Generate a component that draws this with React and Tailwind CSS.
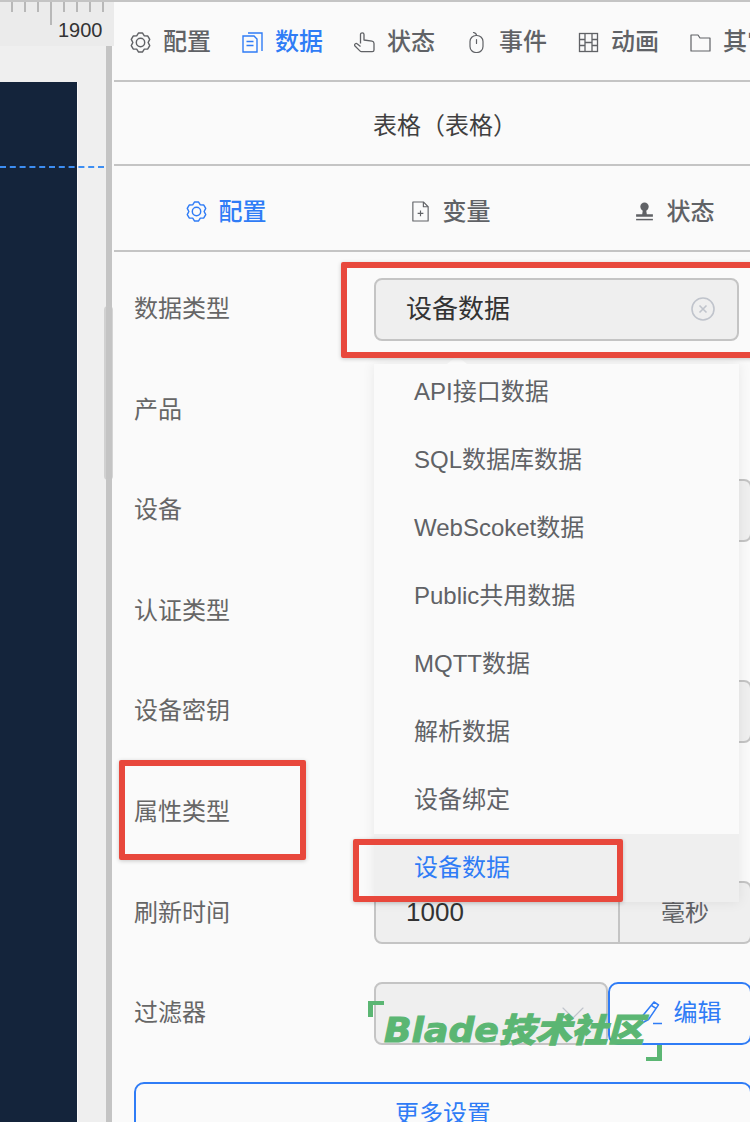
import { ChevronDown } from "lucide-react";

const Gear = ({ className }) => (
  <svg viewBox="1 1 22 22" className={className} fill="none" stroke="currentColor" strokeWidth="1.5" strokeLinejoin="round">
    <path d="M10 2h4l2 3.07 3.66.2 2 3.46L20 12l1.66 3.27-2 3.46-3.66.2-2 3.07h-4l-2-3.07-3.66-.2-2-3.46L4 12 2.34 8.73l2-3.46L8 5.07z" />
    <circle cx="12" cy="12" r="4.4" />
  </svg>
);

const DocCopy = ({ className }) => (
  <svg viewBox="0 0 21 21" className={className} fill="none" stroke="currentColor" strokeWidth="1.4">
    <path d="M6 1h14v18" />
    <path d="M1 4h11l3 3v13H1z" />
    <path d="M4.5 9.5h7M4.5 13.5h7" />
  </svg>
);

const Hand = ({ className }) => (
  <svg viewBox="0 0 21 21" className={className} fill="none" stroke="currentColor" strokeWidth="1.3" strokeLinejoin="round">
    <path d="M6.5 11.5V2.4c0-2 3.5-2 3.5 0V8l8 1.2c1.4.2 2 1.1 2 2.3v6.5c0 1-.7 1.7-1.7 1.7H7.5c-.7 0-1.2-.3-1.6-.8L1 14c-1.2-1.6.9-3.4 2.4-2l3.1 2.6" />
  </svg>
);

const Mouse = ({ className }) => (
  <svg viewBox="0 0 21 21" className={className} fill="none" stroke="currentColor" strokeWidth="1.2" strokeLinecap="round">
    <rect x="4" y="3.5" width="13" height="17" rx="6" />
    <path d="M10.5 7.5v4M10.5 3.5c0-1.5-1-2.5-3-3" />
  </svg>
);

const Film = ({ className }) => (
  <svg viewBox="0 0 21 21" className={className} fill="none" stroke="currentColor" strokeWidth="1.3">
    <rect x="1.5" y="1.5" width="18" height="18" />
    <path d="M7 1.5v18M14 1.5v18M1.5 7.5h5.5M1.5 13.5h5.5M14 7.5h5.5M14 13.5h5.5M7 10.5h7" />
  </svg>
);

const Folder = ({ className }) => (
  <svg viewBox="0 0 21 21" className={className} fill="none" stroke="currentColor" strokeWidth="1.2" strokeLinejoin="round">
    <path d="M1 3h7l2 3h10v13H1z" />
  </svg>
);

const DocAdd = ({ className }) => (
  <svg viewBox="1 0 18 22" className={className} fill="none" stroke="currentColor" strokeWidth="1.2" strokeLinejoin="round">
    <path d="M2 1h11l5 5v15H2z" />
    <path d="M13 1v5h5M7 13h6M10 10v6" />
  </svg>
);

const Stamp = ({ className }) => (
  <svg viewBox="0 0 20 20" className={className} fill="currentColor">
    <circle cx="10" cy="5.5" r="4" />
    <path d="M8.5 8h3l.7 4.5H18V15H2v-2.5h5.8z" />
    <rect x="2" y="17" width="16" height="1.4" />
  </svg>
);

const Pencil = ({ className }) => (
  <svg viewBox="0 0 24 24" className={className} fill="none" stroke="currentColor" strokeWidth="1.5" strokeLinejoin="round">
    <path d="M15 1l4.5 2.8L9.5 18.5 3 22l.5-7z" />
    <path d="M12.5 4.5l4.5 2.8M14 22.5h9" />
  </svg>
);

const topTabs = [
  { label: "配置", Icon: Gear },
  { label: "数据", Icon: DocCopy, active: true },
  { label: "状态", Icon: Hand },
  { label: "事件", Icon: Mouse },
  { label: "动画", Icon: Film },
  { label: "其它", Icon: Folder },
];

const subTabs = [
  { label: "配置", Icon: Gear, active: true },
  { label: "变量", Icon: DocAdd },
  { label: "状态", Icon: Stamp },
];

const menuItems = ["API接口数据", "SQL数据库数据", "WebScoket数据", "Public共用数据", "MQTT数据", "解析数据", "设备绑定", "设备数据"];

const Ruler = () => (
  <div className="relative h-[44px] w-[114px] bg-[#ebebeb]">
    <div className="flex h-[10px] gap-[11px] pl-[11px]">
      {[0, 1, 2, 3, 4, 5, 6, 7].map((i) => (
        <span key={i} className={`w-[2px] bg-[#b8b8b8] ${i === 3 ? "h-[23px]" : "h-[10px]"}`} />
      ))}
    </div>
    <span className="absolute left-[58px] top-[16px] text-[20px] leading-[24px] text-[#333]">1900</span>
  </div>
);

const Row = ({ label, children }) => (
  <div className="flex h-[63px] items-center">
    <span className="w-[240px] shrink-0 text-[24px] text-[#666]">{label}</span>
    {children}
  </div>
);

const Box = ({ className = "", children }) => (
  <div className={`flex h-full items-center border-2 border-[#c4c4c4] bg-[#efefef] ${className}`}>{children}</div>
);

const App = () => {
  return (
    <div className="relative flex h-[1122px] w-[750px] overflow-hidden border-t-2 border-[#c4c4c4] bg-[#fafafa] font-['Liberation_Sans','Noto_Sans_CJK_SC',sans-serif]">
      {/* canvas side */}
      <div className="relative flex w-[114px] shrink-0 flex-col">
        <Ruler />
        <div className="flex flex-1">
          <div className="relative flex w-[106px] flex-col bg-[#efefef]">
            <div className="h-[36px]" />
            <div className="flex-1 w-[77px] bg-[#14243b]" />
            <div className="absolute left-[77px] top-[36px] bottom-0 w-px bg-[#fafafa]" />
          </div>
          <div className="w-[6px] bg-[#c4c4c4]" />
        </div>
        <div className="absolute left-0 top-[164px] w-[104px] border-t-2 border-dashed border-[#3d8ef2]" />
        <div className="absolute left-[104px] top-[304px] h-[174px] w-[9px] rounded-[4px] bg-[#c4c4c4]/70" />
      </div>

      {/* config panel */}
      <div className="relative w-[662px] shrink-0">
        <div className="flex h-[80px] items-center border-b-2 border-[#c4c4c4] pl-[16px] pt-[2px]">
          {topTabs.map(({ label, Icon, active }) => (
            <div key={label} className={`flex w-[112px] shrink-0 items-center gap-[12px] text-[24px] font-medium ${active ? "text-[#2f7cf6]" : "text-[#606266]"}`}>
              <Icon className="h-[21px] w-[21px] shrink-0" />
              <span className="whitespace-nowrap">{label}</span>
            </div>
          ))}
        </div>

        <div className="flex h-[84px] items-center justify-center border-b-2 border-[#c4c4c4] pt-[5px] text-[24px] text-[#404040]">表格（表格）</div>

        <div className="flex h-[86px] items-center border-b-2 border-[#c4c4c4] pt-[7px]">
          {subTabs.map(({ label, Icon, active }) => (
            <div key={label} className={`flex w-[224px] shrink-0 items-center justify-center gap-[12px] text-[24px] font-medium ${active ? "text-[#2f7cf6]" : "text-[#606266]"}`}>
              <Icon className="h-[21px] w-[21px] shrink-0" />
              <span>{label}</span>
            </div>
          ))}
        </div>

        <div className="flex flex-col gap-[37.6px] pl-[20px] pr-[24px] pt-[25.5px]">
          <Row label="数据类型">
            <Box className="w-[365px] justify-between rounded-[8px] pl-[30px] pr-[22px] text-[26px] text-[#333]">
              <span>设备数据</span>
              <svg viewBox="0 0 24 24" className="h-[24px] w-[24px] text-[#c0c4cc]" fill="none" stroke="currentColor" strokeWidth="1.6">
                <circle cx="12" cy="12" r="11" />
                <path d="M8.5 8.5l7 7M15.5 8.5l-7 7" />
              </svg>
            </Box>
          </Row>
          <Row label="产品">
            <Box className="w-[365px] rounded-[8px]" />
          </Row>
          <Row label="设备">
            <Box className="w-full rounded-[8px]" />
          </Row>
          <Row label="认证类型">
            <Box className="w-[365px] rounded-[8px]" />
          </Row>
          <Row label="设备密钥">
            <Box className="w-full rounded-[8px]" />
          </Row>
          <Row label="属性类型">
            <Box className="w-[365px] rounded-[8px]" />
          </Row>
          <Row label="刷新时间">
            <Box className="w-[246px] rounded-l-[8px] pl-[30px] text-[26px] text-[#333]">1000</Box>
            <Box className="flex-1 justify-center rounded-r-[8px] border-l-0 text-[24px] text-[#606266]">毫秒</Box>
          </Row>
          <Row label="过滤器">
            <Box className="w-[234px] justify-end rounded-[8px] pr-[13px]">
              <ChevronDown className="h-[40px] w-[40px] text-[#c0c4cc]" strokeWidth={0.7} />
            </Box>
            <div className="flex h-full flex-1 items-center justify-center gap-[11px] rounded-[10px] border-2 border-[#2f7cf6] text-[24px] text-[#2f7cf6]">
              <Pencil className="h-[24px] w-[24px]" />
              <span>编辑</span>
            </div>
          </Row>
          <div className="flex h-[63px] items-center justify-center rounded-[10px] border-2 border-[#2f7cf6] text-[24px] text-[#2f7cf6]">更多设置</div>
        </div>
      </div>

      {/* select dropdown */}
      <div className="absolute left-[374px] top-[362px] h-[538px] w-[365px] overflow-hidden bg-[#fafafa] text-[24px] text-[#606266] shadow-[0_0_12px_rgba(0,0,0,0.08)]">
        <div className="-mt-[6px] flex flex-col">
          {menuItems.map((item, i) => (
            <div key={item} className={`flex h-[68px] shrink-0 items-center pl-[40px] ${i === 7 ? "bg-[#efefef] text-[#2f7cf6]" : ""}`}>
              {item}
            </div>
          ))}
        </div>
      </div>
      <div className="absolute left-[447px] top-[354px] h-0 w-0 border-x-[10px] border-b-[8px] border-x-transparent border-b-[#fafafa]" />

      {/* red annotation boxes */}
      <div className="absolute left-[341px] top-[260px] h-[96px] w-[415px] rounded-[2px] border-[6px] border-[#e8483c] shadow-[0_1px_4px_rgba(0,0,0,0.2)]" />
      <div className="absolute left-[119px] top-[758px] h-[100px] w-[187px] rounded-[2px] border-[6px] border-[#e8483c] shadow-[0_1px_4px_rgba(0,0,0,0.2)]" />
      <div className="absolute left-[353px] top-[837px] h-[63px] w-[270px] rounded-[2px] border-[6px] border-[#e8483c] shadow-[0_1px_4px_rgba(0,0,0,0.2)]" />

      {/* watermark */}
      <div className="absolute left-[368px] top-[999px] h-[16px] w-[16px] border-l-[5px] border-t-[4px] border-[#5bb673]" />
      <div className="absolute left-[646px] top-[1043px] h-[16px] w-[16px] border-b-[4px] border-r-[5px] border-[#5bb673]" />
      <div className="absolute left-[384px] top-[1009px] origin-left scale-x-[1.097] whitespace-nowrap font-['DejaVu_Sans','Noto_Sans_CJK_SC',sans-serif] text-[33px] font-black italic leading-[40px] text-[#5bb673] [-webkit-text-stroke:1px_#5bb673]">
        Blade技术社区
      </div>
    </div>
  );
};

export default App;
